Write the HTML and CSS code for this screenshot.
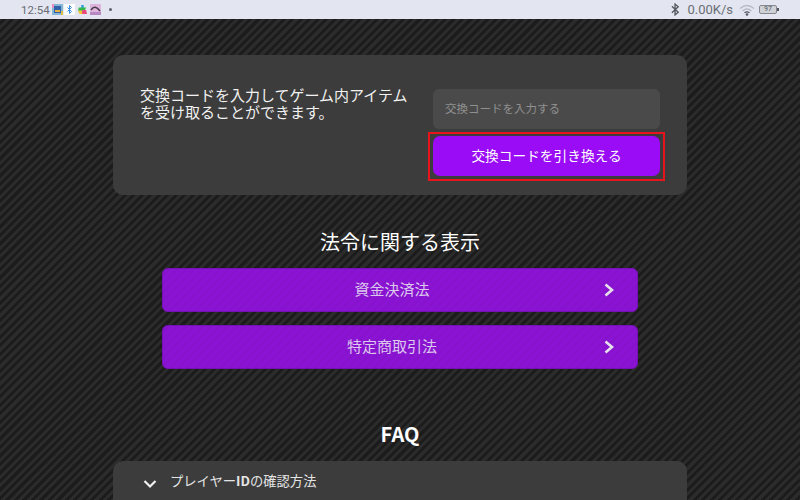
FILE: index.html
```html
<!DOCTYPE html>
<html lang="ja">
<head>
<meta charset="UTF-8" />
<meta name="viewport" content="width=device-width, initial-scale=1" />
<title>交換コード</title>
<link rel="stylesheet" href="styles.css">
</head>
<body>

  <!-- Status bar -->
  <div class="status-bar">
    <div class="status-left">
      <span class="clock">12:54</span>
      <svg class="app-icon" viewBox="0 0 11 11"><rect width="11" height="11" fill="#86b6d6"/><rect x="2" y="2" width="7" height="7" fill="#2f62a8"/><rect x="3" y="6" width="5" height="2" fill="#e8b24a"/><rect x="0" y="0" width="2" height="4" fill="#e98ac0"/><rect x="9" y="7" width="2" height="4" fill="#d9c04a"/></svg>
      <svg class="app-icon" viewBox="0 0 11 11"><rect width="11" height="11" fill="#fff"/><path d="M3.500 3.500l4 4-2 2v-8l2 2-4 4" fill="none" stroke="#3b8fe0" stroke-width="1"/></svg>
      <svg class="app-icon play" viewBox="0 0 11 11"><path d="M4 0h3v4H4z" fill="#2e9be0"/><path d="M1 3h9l-2 4H0z" fill="#35b84b"/><path d="M0 7h5v4H2z" fill="#f0c52e"/><path d="M5 6h5l1 5H5z" fill="#e84a7a"/></svg>
      <svg class="app-icon" viewBox="0 0 11 11"><rect width="11" height="11" fill="#dcb4dc"/><path d="M1 6q4-6 9 1" fill="none" stroke="#4a3a4a" stroke-width="1.500"/><rect y="8" width="11" height="3" fill="#b987c4"/></svg>
      <span class="dot"></span>
    </div>
    <div class="status-right">
      <svg class="bt" viewBox="0 0 10 14"><path d="M1 3.500l7 6.500-3.500 3V1L8 4 1 10.500" fill="none" stroke="#55585f" stroke-width="1.500"/></svg>
      <span class="speed">0.00K/s</span>
      <svg class="wifi" viewBox="0 0 16 12"><path d="M1 4.500q7-6 14 0" fill="none" stroke="#b9bcc4" stroke-width="1.300"/><path d="M3.500 7q4.500-4 9 0" fill="none" stroke="#b9bcc4" stroke-width="1.300"/><path d="M5.500 8.800q2.500-2 5 0" fill="none" stroke="#55585f" stroke-width="1.300"/><circle cx="8" cy="10.500" r="1.300" fill="#55585f"/></svg>
      <span class="battery"><span class="battery-level">97</span></span>
    </div>
  </div>

  <div class="page">
    <!-- Code entry -->
    <section class="card code-card">
      <p class="code-text">交換コードを入力してゲーム内アイテムを受け取ることができます。</p>
      <div class="code-form">
        <input class="code-input" type="text" placeholder="交換コードを入力する" />
        <div class="redeem-frame">
          <button class="redeem-btn">交換コードを引き換える</button>
        </div>
      </div>
    </section>

    <h2 class="legal-title">法令に関する表示</h2>
    <div class="legal-links">
      <a class="legal-btn">資金決済法
        <svg class="chevron-right" viewBox="0 0 10 14"><path d="M1.500 1.500L8 7l-6.500 5.500" fill="none" stroke="#e6e0ea" stroke-width="2.600"/></svg>
      </a>
      <a class="legal-btn">特定商取引法
        <svg class="chevron-right" viewBox="0 0 10 14"><path d="M1.500 1.500L8 7l-6.500 5.500" fill="none" stroke="#e6e0ea" stroke-width="2.600"/></svg>
      </a>
    </div>

    <h2 class="faq-title">FAQ</h2>
    <div class="card faq-item">
      <svg class="chevron-down" viewBox="0 0 14 10"><path d="M1.500 2L7 7.500 12.500 2" fill="none" stroke="#f0f0f0" stroke-width="2.200"/></svg>
      <span>プレイヤー<b>ID</b>の確認方法</span>
    </div>
  </div>

</body>
</html>
```

FILE: styles.css
```css
html, body {
  margin: 0;
  height: 500px;
  overflow: hidden;
}
body {
  font-family: "Noto Sans CJK JP", "Noto Sans", sans-serif;
  color: #f2f2f2;
  background-color: #262626;
  background-image: repeating-linear-gradient(135deg, #2b2b2b 0, #2b2b2b 3px, #1c1c1c 3px, #1c1c1c 6px);
}

/* Status bar */
.status-bar {
  height: 19px;
  background: #e3e6f0;
  display: flex;
  align-items: center;
  justify-content: space-between;
  padding: 0 21px;
  color: #6a6d74;
  font-family: "Roboto", sans-serif;
  font-size: 11.500px;
}
.status-left, .status-right {
  display: flex;
  align-items: center;
}
.clock {
  margin-right: 2px;
}
.app-icon {
  width: 11px;
  height: 11px;
  margin-right: 1px;
}
.app-icon.play {
  width: 9px;
  margin: 0 3px 0 2px;
}
.dot {
  width: 3px;
  height: 3px;
  margin-left: 7px;
  border-radius: 50%;
  background: #5c5f66;
}
.bt {
  width: 9px;
  height: 13px;
  margin-right: 7px;
}
.speed {
  font-size: 13px;
  margin-right: 6px;
}
.wifi {
  width: 16px;
  height: 12px;
  margin-right: 4px;
}
.battery {
  position: relative;
  width: 16px;
  height: 7px;
  margin-right: 2px;
  border: 1px solid #85888f;
  border-radius: 2px;
  background: #cfd1d6;
  display: flex;
  align-items: center;
  justify-content: center;
}
.battery::after {
  content: "";
  position: absolute;
  right: -3px;
  top: 2px;
  width: 2px;
  height: 3px;
  background: #55585f;
}
.battery-level {
  font-size: 7px;
  line-height: 7px;
  color: #55585f;
}

/* Main column */
.page {
  width: 574px;
  margin: 0 auto;
  padding-top: 36px;
}
.card {
  background: #3c3c3c;
  border-radius: 10px;
}
.code-card {
  height: 140px;
  box-sizing: border-box;
  padding: 31px 27px 0;
  display: flex;
  justify-content: space-between;
}
.code-text {
  width: 270px;
  margin: 0;
  font-size: 15px;
  line-height: 17px;
}
.code-form {
  width: 227px;
  padding-top: 3px;
}
.code-input {
  display: block;
  width: 100%;
  height: 40px;
  box-sizing: border-box;
  padding: 0 12px 3px;
  border: none;
  border-radius: 6px;
  outline: none;
  background: #4a4a4a;
  color: #eee;
  font-family: inherit;
  font-size: 11.500px;
}
.code-input::placeholder {
  color: #8f8f8f;
}
.redeem-frame {
  margin: 3px -5px 0;
  padding: 2px 3px 3px;
  border: 2px solid #e8141c;
}
.redeem-btn {
  display: block;
  width: 100%;
  height: 40px;
  padding: 0 0 3px;
  border: none;
  border-radius: 7px;
  background: #9a0cf5;
  color: #fff;
  font-family: inherit;
  font-size: 13.700px;
}

/* Legal links */
.legal-title {
  margin: 32px 0 0;
  height: 41px;
  font-size: 20px;
  line-height: 29px;
  font-weight: 400;
  text-align: center;
  color: #fff;
}
.legal-links {
  width: 476px;
  margin: 0 auto;
  display: flex;
  flex-direction: column;
  gap: 13px;
}
.legal-btn {
  position: relative;
  height: 44px;
  box-sizing: border-box;
  padding: 0 16px 4px 0;
  display: flex;
  align-items: center;
  justify-content: center;
  border: 1px solid #7510b4;
  border-radius: 6px;
  background-color: #8a14d2;
  background-image: repeating-linear-gradient(135deg, #8b14d4 0, #8b14d4 3px, #8713ce 3px, #8713ce 6px);
  color: #dcc8ec;
  font-size: 15px;
}
.chevron-right {
  position: absolute;
  right: 23px;
  top: 14px;
  width: 10px;
  height: 14px;
}

/* FAQ */
.faq-title {
  margin: 51px 0 0;
  height: 41px;
  font-size: 20px;
  line-height: 28px;
  font-weight: 700;
  text-align: center;
  color: #fff;
}
.faq-item {
  height: 60px;
  box-sizing: border-box;
  padding: 10px 30px 0;
  display: flex;
  align-items: flex-start;
  gap: 13px;
  font-size: 13.300px;
  line-height: 20px;
  color: #e4e4e4;
}
.chevron-down {
  width: 14px;
  height: 10px;
  margin-top: 8px;
  flex: none;
}
```
